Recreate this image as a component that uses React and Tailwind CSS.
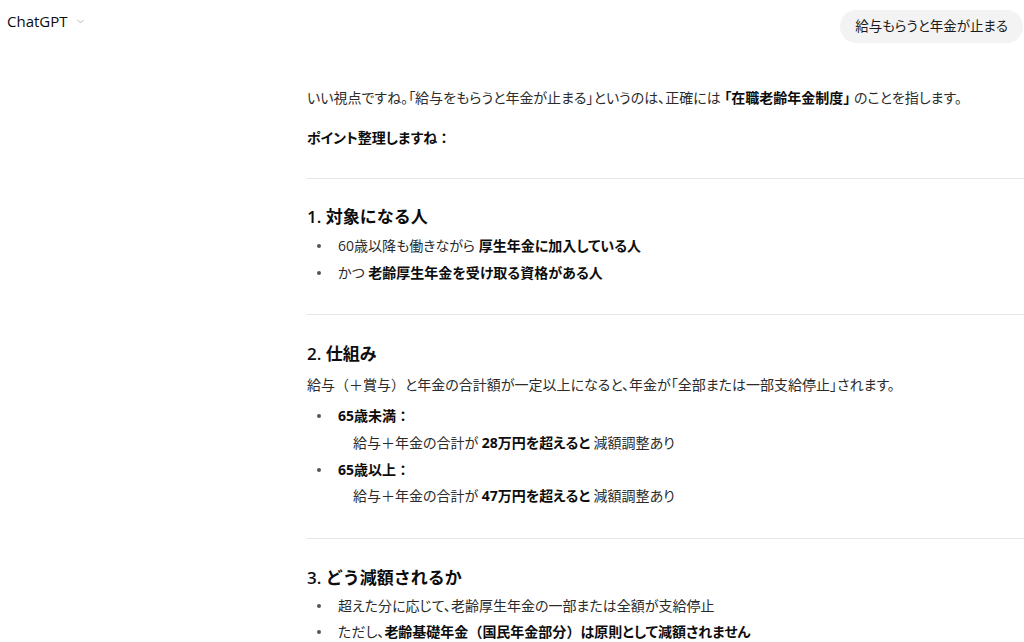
import { ChevronDown } from 'lucide-react'

// full-width punctuation kept at full width (parens, colon)
function Fw({ children }) {
  return <span className="[font-feature-settings:normal]">{children}</span>
}

function Bullet({ children, className = '' }) {
  return (
    <li className={`flex ${className}`}>
      <span className="w-[31px] shrink-0 flex justify-start pl-[10px] pt-[11px]">
        <span className="block w-[4px] h-[4px] rounded-full bg-[#555]" />
      </span>
      <div className="flex-1">{children}</div>
    </li>
  )
}

function Rule({ className = '' }) {
  return <hr className={`border-0 border-t border-[#e5e5e5] ${className}`} />
}

const B = ({ children }) => <b className="font-bold text-[#0d0d0d]">{children}</b>

export default function App() {
  return (
    <div className="w-[1024px] h-[642px] overflow-hidden bg-white text-[#2b2b2b] [font-family:'Open_Sans','Noto_Sans_CJK_JP',sans-serif]">
      {/* top row: model picker + user message */}
      <div className="flex justify-between items-start">
        <div className="flex items-center gap-[7px] pl-[7px] pt-[11px]">
          <span className="text-[15px] leading-[20px] text-[#0d0d0d]">ChatGPT</span>
          <ChevronDown className="w-[11px] h-[11px] text-[#9a9a9a]" strokeWidth={1.5} />
        </div>
        <div className="mt-[10px] mr-[1px] h-[33px] px-[15px] flex items-center rounded-full bg-[#f3f3f3] text-[13.5px] text-[#1a1a1a] [font-feature-settings:'palt']">
          給与もらうと年金が止まる
        </div>
      </div>

      {/* assistant answer */}
      <div className="pl-[307px] text-[14px] leading-[26px] [font-feature-settings:'palt']">
        <p className="mt-[42px]">
          いい視点ですね。「給与をもらうと年金が止まる」というのは、正確には <B>「在職老齢年金制度」</B> のことを指します。
        </p>
        <p className="mt-[14px] font-bold text-[#0d0d0d]">
          ポイント整理しますね<Fw>：</Fw>
        </p>

        <Rule className="mt-[27px]" />

        <h3 className="mt-[25px] text-[17px] leading-[26px] font-semibold text-[#0d0d0d] [font-feature-settings:normal]">1. 対象になる人</h3>
        <ul className="mt-[3px]">
          <Bullet>
            60歳以降も働きながら <B>厚生年金に加入している人</B>
          </Bullet>
          <Bullet className="mt-[1px]">
            かつ <B>老齢厚生年金を受け取る資格がある人</B>
          </Bullet>
        </ul>

        <Rule className="mt-[28px]" />

        <h3 className="mt-[26px] text-[17px] leading-[26px] font-semibold text-[#0d0d0d] [font-feature-settings:normal]">2. 仕組み</h3>
        <p className="mt-[5px]">
          給与<Fw>（＋賞与）</Fw>と年金の合計額が一定以上になると、年金が「全部または一部支給停止」されます。
        </p>
        <ul className="mt-[5px]">
          <Bullet>
            <B>65歳未満<Fw>：</Fw></B>
            <div className="pl-[15px] mt-[1px]">
              給与<Fw>＋</Fw>年金の合計が <B>28万円を超えると</B> 減額調整あり
            </div>
          </Bullet>
          <Bullet className="mt-[1px]">
            <B>65歳以上<Fw>：</Fw></B>
            <div className="pl-[15px]">
              給与<Fw>＋</Fw>年金の合計が <B>47万円を超えると</B> 減額調整あり
            </div>
          </Bullet>
        </ul>

        <Rule className="mt-[29px]" />

        <h3 className="mt-[26px] text-[17px] leading-[26px] font-semibold text-[#0d0d0d] [font-feature-settings:normal]">3. どう減額されるか</h3>
        <ul className="mt-[2px]">
          <Bullet>超えた分に応じて、老齢厚生年金の一部または全額が支給停止</Bullet>
          <Bullet>
            ただし、<B>老齢基礎年金<Fw>（</Fw>国民年金部分<Fw>）</Fw>は原則として減額されません</B>
          </Bullet>
        </ul>
      </div>
    </div>
  )
}
